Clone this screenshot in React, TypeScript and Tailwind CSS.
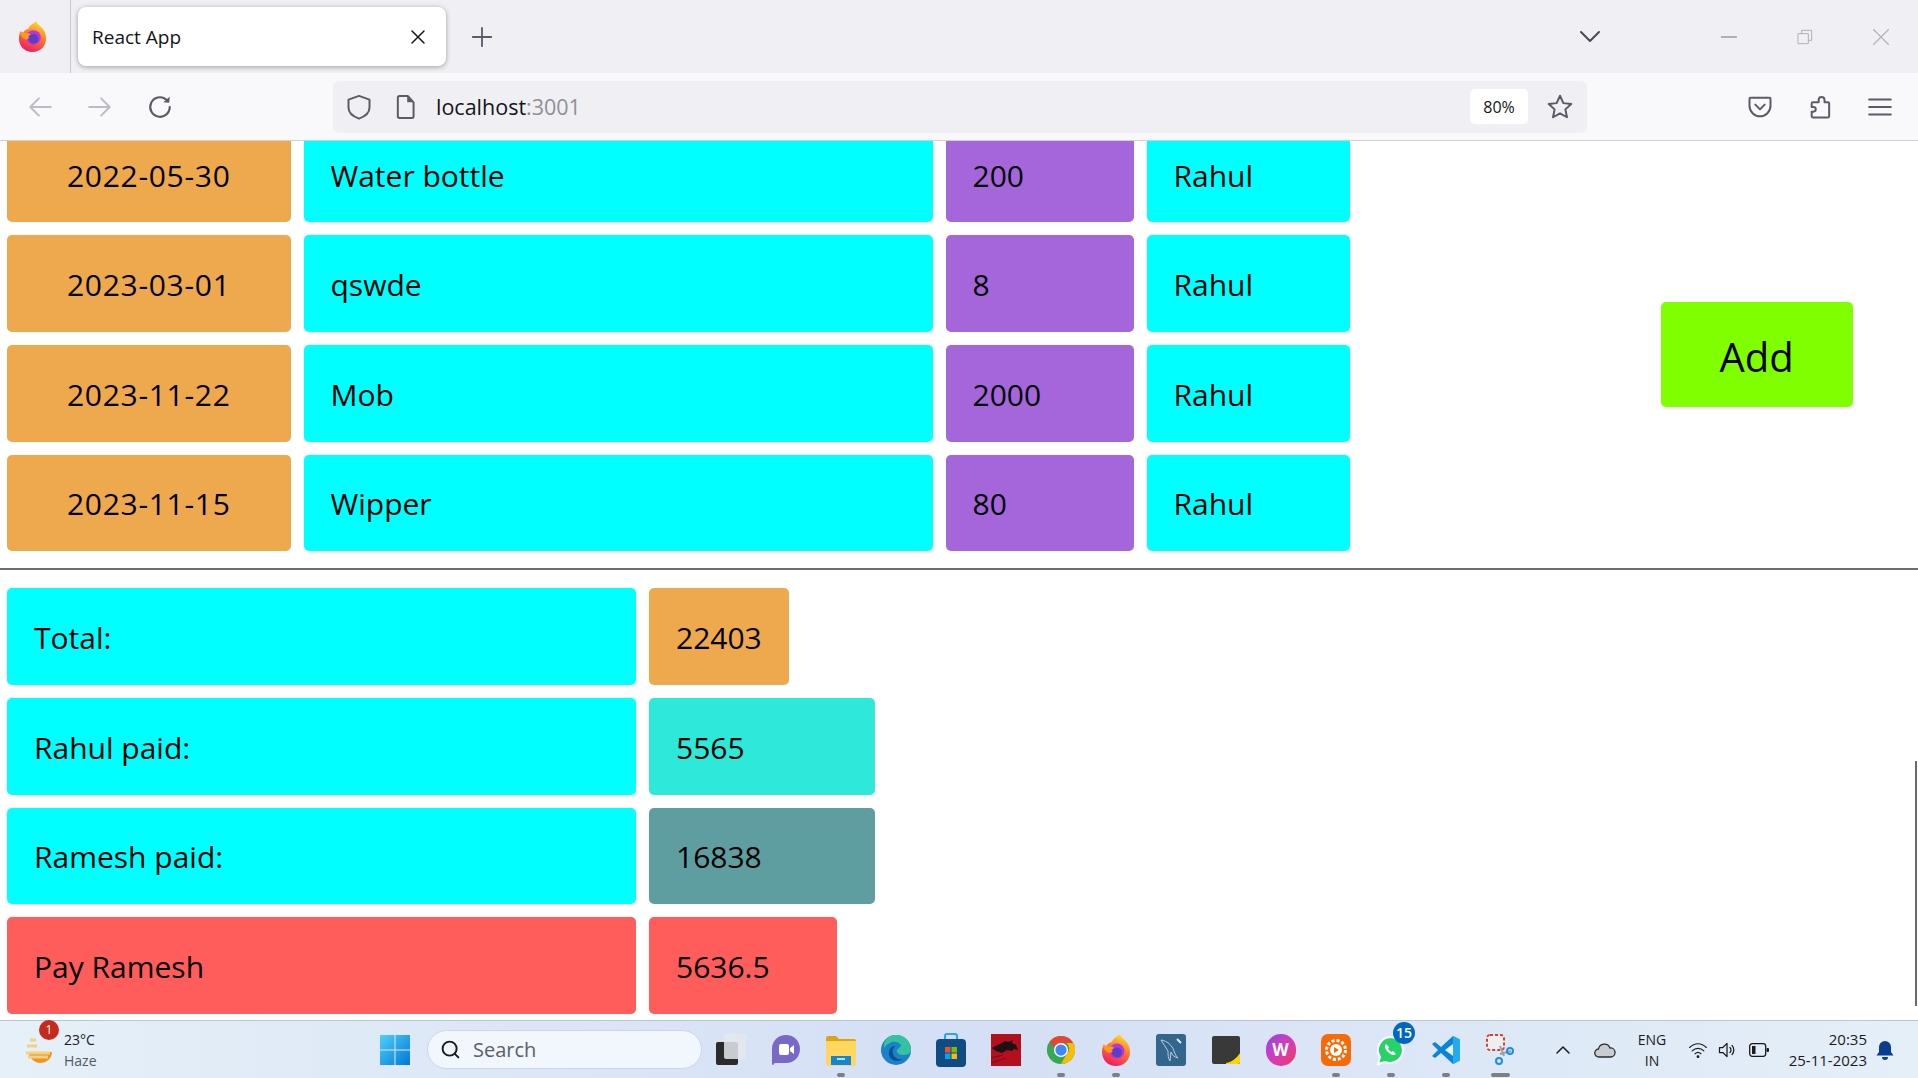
import type { ReactNode } from "react";
import { Search } from "lucide-react";

const font = "font-['Open_Sans','Liberation_Sans',sans-serif]";

const rows = [
  { date: "2022-05-30", item: "Water bottle", amount: "200", who: "Rahul", clipped: true },
  { date: "2023-03-01", item: "qswde", amount: "8", who: "Rahul" },
  { date: "2023-11-22", item: "Mob", amount: "2000", who: "Rahul" },
  { date: "2023-11-15", item: "Wipper", amount: "80", who: "Rahul" },
];

const Firefox = ({ size, id }: { size: number; id: string }) => (
  <svg width={size} height={size} viewBox="0 0 32 32">
    <defs>
      <linearGradient id={id} x1="0.7" y1="0" x2="0.3" y2="1">
        <stop offset="0" stopColor="#ffe226" />
        <stop offset="0.45" stopColor="#ff7a2a" />
        <stop offset="1" stopColor="#f0146c" />
      </linearGradient>
    </defs>
    <path d="M20 0c0 3 6 6 8 10 1.500 3 2 5 2 8 0 8-6 14-14 14S2 26 2 18c0-3 .8-6 2-8 .3 1.500 1 2.500 2 3 1-3 3.500-4.500 6-5 1-4 5-5 8-8z" fill={`url(#${id})`} />
    <circle cx="17" cy="17" r="7.500" fill="#b833e1" />
    <circle cx="17" cy="18.500" r="5" fill="#5b3fc2" />
    <path d="M3 12c3-1 5 0 7 1 2-1 3 0 4 1l-3 2 2 1-3 2c-3 0-6-3-7-7z" fill="#ff9a1f" />
  </svg>
);

const Cell = ({ bg, w, center, clipped, children }: { bg: string; w: string; center?: boolean; clipped?: boolean; children: ReactNode }) => (
  <div className={`${bg} ${w} ${clipped ? "h-[81px] rounded-b-[5px] pb-[12px]" : "h-[96.8px] rounded-[5px] pt-[2px]"} flex items-center text-[30px] text-black ${center ? "justify-center tracking-[0.7px]" : "pl-[27px]"}`}>
    {children}
  </div>
);

const TaskIcon = ({ running, wide, children }: { running?: boolean; wide?: boolean; children: ReactNode }) => (
  <div className="relative flex h-[58px] w-[55px] items-center justify-center">
    {children}
    {running && <span className={`absolute bottom-[2px] h-[4px] rounded-full bg-[#7b8088] ${wide ? "w-[19px]" : "w-[8px]"}`} />}
  </div>
);

const Stroke = ({ children, w = 24, h = 24, color = "#5b5b66", sw = 2 }: { children: ReactNode; w?: number; h?: number; color?: string; sw?: number }) => (
  <svg width={w} height={h} viewBox="0 0 24 24" fill="none" stroke={color} strokeWidth={sw} strokeLinecap="round" strokeLinejoin="round">
    {children}
  </svg>
);

export default function App() {
  return (
    <div className={`relative flex h-screen w-full flex-col overflow-hidden bg-white ${font}`}>
      {/* tab strip */}
      <div className="flex h-[73px] items-center bg-[#f0f0f4]">
        <div className="flex h-full w-[71px] items-center justify-center border-r border-[#c9c9ce] pr-[5px]">
          <Firefox size={31} id="ffhead" />
        </div>
        <div className="ml-[7px] flex h-[59px] w-[368px] items-center justify-between rounded-[8px] bg-white pl-[14px] pr-[19px] pt-[1px] shadow-[0_1px_5px_rgba(0,0,0,0.35)]">
          <span className="text-[19px] text-[#15141a]">React App</span>
          <Stroke w={18} h={18} color="#15141a"><path d="M4 4l16 16M20 4L4 20" /></Stroke>
        </div>
        <div className="ml-[25px]">
          <Stroke w={22} h={22}><path d="M12 2v20M2 12h20" /></Stroke>
        </div>
        <div className="ml-auto mr-[28px] flex items-center">
          <Stroke w={24} h={24} color="#4a4a55"><path d="M3 7l9 9 9-9" /></Stroke>
          <div className="ml-[119px] h-[2px] w-[16px] bg-[#b0b0b6]" />
          <div className="ml-[60px]">
            <Stroke w={16} h={16} color="#b0b0b6" sw={1.5}><path d="M2 7h15v15H2zM7 7V2h15v15h-5" /></Stroke>
          </div>
          <div className="ml-[59px]">
            <Stroke w={18} h={18} color="#b0b0b6" sw={1.5}><path d="M2 2l20 20M22 2L2 22" /></Stroke>
          </div>
        </div>
      </div>

      {/* toolbar */}
      <div className="flex h-[68px] items-center border-b border-[#cfcfd4] bg-[#f9f9fb]">
        <div className="ml-[27px]">
          <Stroke w={26} h={26} color="#bcbcc2" sw={1.8}><path d="M22 12H3M11 4l-8 8 8 8" /></Stroke>
        </div>
        <div className="ml-[34px]">
          <Stroke w={26} h={26} color="#bcbcc2" sw={1.8}><path d="M2 12h19M13 4l8 8-8 8" /></Stroke>
        </div>
        <div className="ml-[34px]">
          <Stroke w={26} h={26} sw={2}>
            <path d="M21 12a9 9 0 1 1-3.500-7.100" />
            <path d="M21 2.500L20.500 8l-5.500-.5z" fill="#5b5b66" stroke="none" />
          </Stroke>
        </div>
        <div className="ml-[160px] flex h-[52px] w-[1254px] items-center rounded-[6px] bg-[#f0f0f4]">
          <div className="ml-[12px]">
            <Stroke w={28} h={28} sw={1.7}><path d="M12 2.500l9 3.200v6.800c0 4.300-3.600 7.600-9 9.500-5.400-1.900-9-5.200-9-9.500V5.700z" /></Stroke>
          </div>
          <div className="ml-[19px]">
            <Stroke w={28} h={28} sw={1.7}>
              <path d="M6.500 2.500h7l5 5.500v12a1.500 1.500 0 0 1-1.500 1.500H6.500A1.500 1.500 0 0 1 5 20V4a1.500 1.500 0 0 1 1.500-1.500z" />
              <path d="M13 2.500v5.500h5.500" fill="#5b5b66" stroke="none" />
            </Stroke>
          </div>
          <span className="ml-[16px] pt-[1px] text-[21.5px] text-[#15141a]">
            localhost<span className="text-[#8f8f95]">:3001</span>
          </span>
          <div className="ml-auto flex h-[35px] w-[58px] items-center justify-center rounded-[5px] bg-white text-[16px] text-[#15141a]">80%</div>
          <div className="ml-[17px] mr-[12px]">
            <Stroke w={30} h={30} sw={1.6}><path d="M12 3l2.700 5.900 6.300.7-4.700 4.300 1.300 6.300L12 17.100l-5.600 3.100 1.300-6.300L3 9.600l6.300-.7z" /></Stroke>
          </div>
        </div>
        <div className="ml-[159px]">
          <Stroke w={28} h={28} sw={1.7}>
            <path d="M4 4h16a1 1 0 0 1 1 1v6c0 5-4 9-9 9s-9-4-9-9V5a1 1 0 0 1 1-1z" />
            <path d="M8 10l4 4 4-4" />
          </Stroke>
        </div>
        <div className="ml-[33px]">
          <Stroke w={28} h={28} sw={1.7}>
            <path d="M5 21a1 1 0 0 1-1-1v-4h1.500a2 2 0 0 0 0-4H4V9a1 1 0 0 1 1-1h5V6a2.500 2.500 0 0 1 5 0v2h3a1 1 0 0 1 1 1v11a1 1 0 0 1-1 1z" />
          </Stroke>
        </div>
        <div className="ml-[32px]">
          <Stroke w={26} h={26} sw={1.8}><path d="M2 5h20M2 12h20M2 19h20" /></Stroke>
        </div>
      </div>

      {/* page */}
      <main className="relative min-h-0 flex-1">
        <section className="flex pl-[7px]">
          <div className="flex flex-col gap-[13px]">
            {rows.map((r) => (
              <div key={r.date} className="flex gap-[13px]">
                <Cell bg="bg-[#eea84d]" w="w-[283.5px]" center clipped={r.clipped}>{r.date}</Cell>
                <Cell bg="bg-[#00ffff]" w="w-[629px]" clipped={r.clipped}>{r.item}</Cell>
                <Cell bg="bg-[#a566dc]" w="w-[188px]" clipped={r.clipped}>{r.amount}</Cell>
                <Cell bg="bg-[#00ffff]" w="w-[203px]" clipped={r.clipped}>{r.who}</Cell>
              </div>
            ))}
          </div>
          <div className="ml-[311px] flex items-center pt-[16px]">
            <button className="h-[105px] w-[192px] rounded-[5px] bg-[#7fff00] pt-[5px] text-[40px] text-black">Add</button>
          </div>
        </section>

        <hr className="mt-[17px] border-t-2 border-[#6e6e6e]" />

        <section className="mt-[18px] flex flex-col gap-[12.8px] pl-[7px]">
          <div className="flex gap-[13px]">
            <Cell bg="bg-[#00ffff]" w="w-[629px]">Total:</Cell>
            <Cell bg="bg-[#eea84d]" w="w-[140px]">22403</Cell>
          </div>
          <div className="flex gap-[13px]">
            <Cell bg="bg-[#00ffff]" w="w-[629px]">Rahul paid:</Cell>
            <Cell bg="bg-[#2ee8d9]" w="w-[226px]">5565</Cell>
          </div>
          <div className="flex gap-[13px]">
            <Cell bg="bg-[#00ffff]" w="w-[629px]">Ramesh paid:</Cell>
            <Cell bg="bg-[#5f9ea0]" w="w-[226px]">16838</Cell>
          </div>
          <div className="flex gap-[13px]">
            <Cell bg="bg-[#ff5c5c]" w="w-[629px]">Pay Ramesh</Cell>
            <Cell bg="bg-[#ff5c5c]" w="w-[188px]">5636.5</Cell>
          </div>
        </section>

        <div className="absolute right-[1px] top-[620px] h-[245px] w-[2px] bg-[#6b6b6b]" />
      </main>

      {/* taskbar */}
      <footer className="flex h-[58px] items-center border-t border-[#bcc5d3] bg-gradient-to-r from-[#e5f0f8] via-[#d5dff5] to-[#e4eff8]">
        <div className="relative ml-[24px] flex w-[356px] items-center">
          <svg width="32" height="32" viewBox="0 0 32 32">
            <path d="M4 18h24c0 6-5 11-12 11-5 0-10-4-12-11z" fill="#f0951f" />
            <path d="M6 6h6M3 12h10M2 19h24M4 23h20" stroke="#f4cf86" strokeWidth="3" />
          </svg>
          <span className="absolute left-[15px] top-[-9px] flex h-[20px] w-[20px] items-center justify-center rounded-full bg-[#c42b1c] text-[12px] text-white">1</span>
          <div className="ml-[8px] flex flex-col text-[14px] leading-[21px]">
            <span className="text-[#1b1b1b]">23°C</span>
            <span className="text-[#505a66]">Haze</span>
          </div>
        </div>
        <svg width="30" height="30" viewBox="0 0 30 30" className="mr-[3px]">
          <defs>
            <linearGradient id="winb" x1="0" y1="0" x2="1" y2="1">
              <stop offset="0" stopColor="#4fd0fb" />
              <stop offset="1" stopColor="#0078d4" />
            </linearGradient>
          </defs>
          <path d="M0 0h14.500v14.500H0zM15.500 0H30v14.500H15.500zM0 15.500h14.500V30H0zM15.500 15.500H30V30H15.500z" fill="url(#winb)" />
        </svg>
        <div className="ml-[14px] flex h-[39px] w-[275px] items-center rounded-full border border-[#cdd6e6] bg-[#f2f6fd] pl-[12px] text-[20px] text-[#5a5f68]">
          <Search size={21} color="#1b1b1b" strokeWidth={2.2} />
          <span className="ml-[12px]">Search</span>
        </div>
        <div className="ml-[1px] flex">
          <TaskIcon>
            <div className="relative h-[36px] w-[30px]">
              <div className="absolute bottom-[3px] left-0 h-[23px] w-[22px] rounded-[2px] bg-[#2b2b2b]" />
              <div className="absolute right-0 top-[2px] h-[25px] w-[22px] rounded-[2px] bg-[#e4e7ec]/85" />
            </div>
          </TaskIcon>
          <TaskIcon>
            <svg width="30" height="32" viewBox="0 0 30 32">
              <path d="M15 1c8 0 14 6 14 14s-6 14-14 14H4c-1 0-1 2-2 2-1 0-1-1-1-2V15C1 7 7 1 15 1z" fill="#7a68c8" />
              <rect x="8" y="10" width="10" height="11" rx="2" fill="#fff" />
              <path d="M19 14l4-3v9l-4-3z" fill="#fff" />
            </svg>
          </TaskIcon>
          <TaskIcon running>
            <svg width="30" height="32" viewBox="0 0 30 32">
              <path d="M0 4a2 2 0 0 1 2-2h8l3 3h15a2 2 0 0 1 2 2v4H0z" fill="#d9a514" />
              <path d="M0 7h30v23a2 2 0 0 1-2 2H2a2 2 0 0 1-2-2z" fill="#ffd75e" />
              <path d="M5 22h20v9H5z" fill="#0f86d8" />
              <path d="M11 25h8" stroke="#bfe3fb" strokeWidth="2" />
            </svg>
          </TaskIcon>
          <TaskIcon>
            <svg width="30" height="32" viewBox="0 0 30 32">
              <circle cx="15" cy="16" r="15" fill="#1b82c9" />
              <path d="M3 9C6 3 11 1 15 1c8 0 15 6 15 14 0 4-3 6-7 6-4 0-7-1-7-4 0-3 4-3 4-6-2-3-6-4-9-3-3 1-6 3-8 6z" fill="#35c2a0" />
              <path d="M22 25c-3 2-7 3-10 1-4-2-5-7-3-11 1-2 3-3 5-3-2 2-3 5-2 8 1 4 6 6 10 5z" fill="#0c4f8f" />
            </svg>
          </TaskIcon>
          <TaskIcon>
            <svg width="30" height="34" viewBox="0 0 30 34">
              <path d="M9 6V3a2 2 0 0 1 2-2h8a2 2 0 0 1 2 2v3" fill="none" stroke="#2aa4e8" strokeWidth="2" />
              <rect x="0" y="6" width="30" height="28" rx="4" fill="#0f4c86" />
              <path d="M9 14h5.500v5.500H9z" fill="#f25022" />
              <path d="M15.500 14H21v5.500h-5.500z" fill="#7fba00" />
              <path d="M9 20.500h5.500V26H9z" fill="#00a4ef" />
              <path d="M15.500 20.500H21V26h-5.500z" fill="#ffb900" />
            </svg>
          </TaskIcon>
          <TaskIcon>
            <svg width="30" height="32" viewBox="0 0 30 32">
              <rect width="30" height="32" fill="#b30f1e" />
              <path d="M1 14c5-3 9-4 13-7l3 1 5-2-1 3 4 2 2 5-4-1-2 2-5-1-5 3-6-2z" fill="#1c1216" />
              <path d="M0 24l12-3M0 29l15-5" stroke="#7d0c18" strokeWidth="1" />
            </svg>
          </TaskIcon>
          <TaskIcon running>
            <svg width="30" height="32" viewBox="0 0 32 32">
              <circle cx="16" cy="16" r="15" fill="#34a853" />
              <path d="M16 1a15 15 0 0 1 13 7.500H16a7.500 7.500 0 0 0-7 4.800L3.800 7.500A15 15 0 0 1 16 1z" fill="#ea4335" />
              <path d="M29 8.500A15 15 0 0 1 16 31l6.500-11.200A7.500 7.500 0 0 0 22 8.500z" fill="#fbbc05" />
              <circle cx="16" cy="16" r="7.500" fill="#fff" />
              <circle cx="16" cy="16" r="6" fill="#4285f4" />
            </svg>
          </TaskIcon>
          <TaskIcon running>
            <Firefox size={32} id="fftask" />
          </TaskIcon>
          <TaskIcon>
            <svg width="30" height="32" viewBox="0 0 30 32">
              <rect width="30" height="32" rx="3" fill="#34658c" />
              <path d="M5 6c6 1 11 5 13 11 1 3 2 5 4 7-4-1-6-3-7-6l-1 9c-2-3-2-6-2-10C10 13 7 10 5 6z" fill="none" stroke="#b8cfe0" strokeWidth="1" />
              <path d="M21 5l4 4" stroke="#e4edf3" strokeWidth="2" />
            </svg>
          </TaskIcon>
          <TaskIcon>
            <svg width="28" height="28" viewBox="0 0 28 28">
              <rect width="28" height="28" rx="2" fill="#393939" />
              <path d="M28 17v9a2 2 0 0 1-2 2H14v-1c6-1 11-5 14-10z" fill="#ffd400" />
            </svg>
          </TaskIcon>
          <TaskIcon>
            <div className="flex h-[32px] w-[30px] items-center justify-center rounded-full bg-gradient-to-br from-[#8c3ee6] via-[#d63ab8] to-[#f2325c] text-[17px] font-bold text-white">W</div>
          </TaskIcon>
          <TaskIcon running>
            <div className="flex h-[32px] w-[30px] items-center justify-center rounded-[7px] bg-[#f76a06]">
              <svg width="24" height="24" viewBox="0 0 24 24">
                <circle cx="12" cy="12" r="9.500" fill="none" stroke="#fff" strokeWidth="3" strokeDasharray="3 2" />
                <circle cx="12" cy="12" r="6" fill="#fff" />
                <path d="M10 9l5 3-5 3z" fill="#f76a06" />
              </svg>
            </div>
          </TaskIcon>
          <TaskIcon running>
            <svg width="32" height="32" viewBox="0 0 32 32">
              <path d="M16 3a13 13 0 0 0-11 20l-2 7 7-2A13 13 0 1 0 16 3z" fill="#25d366" stroke="#fff" strokeWidth="2" />
              <path d="M11 10c-2 2-1 5 2 8s6 4 8 2l-3-3-2 1-3-3 1-2z" fill="#fff" />
            </svg>
            <span className="absolute right-[3px] top-[1px] flex h-[22px] w-[22px] items-center justify-center rounded-full bg-[#0067c0] text-[14px] font-semibold text-white">15</span>
          </TaskIcon>
          <TaskIcon running>
            <svg width="30" height="30" viewBox="0 0 30 30">
              <path d="M22 1l7 3.500v21L22 29 10 18l-6 5-3-2 6-6-6-6 3-2 6 5z" fill="#0a84d6" />
              <path d="M22 9l-8 6 8 6z" fill="#e5f0f8" />
              <path d="M22 1l7 3.500v21L22 29z" fill="#25a9f0" />
            </svg>
          </TaskIcon>
          <TaskIcon running wide>
            <svg width="30" height="32" viewBox="0 0 30 32">
              <rect x="1" y="1" width="17" height="15" rx="3" fill="#eceef1" stroke="#d9402c" strokeWidth="2" strokeDasharray="3 2" />
              <path d="M14 12l4 10M25 17l-11 3" stroke="#9aa0a8" strokeWidth="2" />
              <circle cx="24" cy="17" r="3" fill="none" stroke="#1a8fe0" strokeWidth="2" />
              <circle cx="13" cy="27" r="3" fill="none" stroke="#1a8fe0" strokeWidth="2" />
            </svg>
          </TaskIcon>
        </div>
        <div className="ml-[26px]">
          <Stroke w={18} h={18} color="#1b1b1b"><path d="M4 16l8-8 8 8" /></Stroke>
        </div>
        <div className="ml-[22px]">
          <svg width="22" height="16" viewBox="0 0 22 16">
            <path d="M5 15a4 4 0 0 1-.5-8A6 6 0 0 1 16 6a4.500 4.500 0 0 1 1 9z" fill="#c9ccd1" stroke="#2b2b2b" strokeWidth="1.300" />
          </svg>
        </div>
        <div className="ml-[20px] flex w-[32px] flex-col items-center text-[14px] leading-[21px] text-[#1b1b1b]">
          <span>ENG</span>
          <span>IN</span>
        </div>
        <div className="ml-[19px]">
          <Stroke w={22} h={20} color="#1b1b1b" sw={1.4}>
            <path d="M2 9c6-6 14-6 20 0M5 13c4-4 10-4 14 0M8.500 16.500c2-2 5-2 7 0" />
            <circle cx="12" cy="20" r="1" fill="#1b1b1b" />
          </Stroke>
        </div>
        <div className="ml-[8px]">
          <Stroke w={20} h={20} color="#1b1b1b" sw={1.5}>
            <path d="M3 9v6h4l5 5V4L7 9zM15.500 9a4 4 0 0 1 0 6M18 6.500a8 8 0 0 1 0 11" />
          </Stroke>
        </div>
        <svg width="20" height="14" viewBox="0 0 20 14" className="ml-[12px]">
          <rect x="0.700" y="0.700" width="16" height="12.600" rx="2.500" fill="none" stroke="#1b1b1b" strokeWidth="1.300" />
          <rect x="3" y="3" width="3.500" height="8" fill="#1b1b1b" />
          <rect x="17.500" y="5" width="2.500" height="4" rx="1" fill="#1b1b1b" />
        </svg>
        <div className="ml-[19px] flex w-[79px] flex-col items-end whitespace-nowrap text-[15px] leading-[21px] text-[#1b1b1b]">
          <span>20:35</span>
          <span>25-11-2023</span>
        </div>
        <svg width="18" height="20" viewBox="0 0 18 20" className="ml-[9px]">
          <path d="M9 1a6 6 0 0 1 6 6v5l2.500 3.500H.500L3 12V7a6 6 0 0 1 6-6z" fill="#0a3d91" />
          <path d="M6 17h6a3 3 0 0 1-6 0z" fill="#0a3d91" />
        </svg>
      </footer>
    </div>
  );
}
